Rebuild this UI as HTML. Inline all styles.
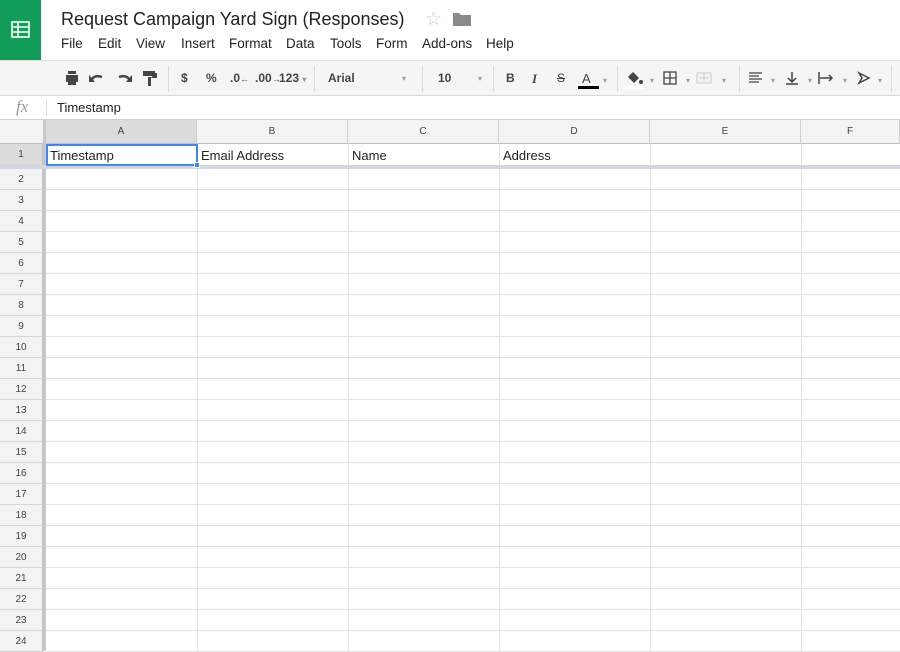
<!DOCTYPE html>
<html><head><style>
*{margin:0;padding:0;box-sizing:border-box}
body{width:900px;height:651px;overflow:hidden;background:#fff;font-family:"Liberation Sans",Arial,sans-serif;position:relative}
.abs{position:absolute}
.logo{left:0;top:0;width:41px;height:60px;background:#0f9d58}
.title{left:61px;top:9px;font-size:18px;color:#222}
.menu{top:36px;font-size:13.5px;color:#222}
.tb{left:0;top:60px;width:900px;height:36px;background:#f5f5f5;border-top:1px solid #e0e0e0;border-bottom:1px solid #d9d9d9}
.sep{top:66px;width:1px;height:26px;background:#dadada}
.ti{top:71px;font-size:12px;color:#444;font-weight:bold}
.fb{top:96px;height:24px;width:900px;border-bottom:1px solid #d0d0d0}
.ch{top:120px;height:24px;background:#f3f3f3;border-bottom:1px solid #c0c0c0;font-size:10px;color:#444;text-align:center;line-height:24px;border-right:1px solid #d0d0d0}
.rh{left:0;width:43px;height:21px;background:#f3f3f3;border-bottom:1px solid #d8d8d8;border-right:1px solid #c0c0c0;font-size:10px;color:#444;text-align:center;line-height:21px}
.vl{top:144px;width:1px;height:507px;background:#e2e2e2}
.hl{left:46px;width:854px;height:1px;background:#e2e2e2}
.cell{top:148px;font-size:13px;color:#222}
.dd{font-size:8px;color:#999}
</style></head><body>
<div class="abs logo">
<svg class="abs" style="left:11px;top:21px" width="19" height="17" viewBox="0 0 19 17"><rect x="1" y="1" width="17" height="15" fill="none" stroke="#fff" stroke-width="1.6"/><path d="M1 6h17M1 11h17M7 1v15" stroke="#fff" stroke-width="1.6"/></svg>
</div>
<div class="abs title">Request Campaign Yard Sign (Responses)</div>
<div class="abs" style="left:425px;top:8px;font-size:19px;color:#ccc">☆</div>
<svg class="abs" style="left:453px;top:12px" width="18" height="14"><path d="M0 1h6l2 2h10v11H0z" fill="#8a8a8a"/></svg>
<div class="abs menu" style="left:61px">File</div>
<div class="abs menu" style="left:98px">Edit</div>
<div class="abs menu" style="left:136px">View</div>
<div class="abs menu" style="left:181px">Insert</div>
<div class="abs menu" style="left:229px">Format</div>
<div class="abs menu" style="left:286px">Data</div>
<div class="abs menu" style="left:330px">Tools</div>
<div class="abs menu" style="left:376px">Form</div>
<div class="abs menu" style="left:422px">Add-ons</div>
<div class="abs menu" style="left:486px">Help</div>
<div class="abs tb"></div>
<svg class="abs" style="left:63px;top:70px" width="100" height="16">
<path d="M3 5h12v7h-2v3H5v-3H3z M5 1h8v3H5z" fill="#444"/>
<path d="M28 11 q3-7 11-4" stroke="#444" stroke-width="2.4" fill="none"/><path d="M26 5v7h6z" fill="#444"/>
<path d="M67 11 q-3-7-11-4" stroke="#444" stroke-width="2.4" fill="none"/><path d="M69 5v7h-6z" fill="#444"/>
<path d="M80 1h12v5h-12z M85 7h3v9h-3z M92 3h2v5h-6v0" fill="#444"/>
</svg>
<div class="abs sep" style="left:168px"></div>
<div class="abs ti" style="left:181px">$</div>
<div class="abs ti" style="left:206px">%</div>
<div class="abs ti" style="left:230px">.0<span style="font-size:9px">←</span></div>
<div class="abs ti" style="left:255px">.00<span style="font-size:9px">→</span></div>
<div class="abs ti" style="left:279px">123 <span class="dd">▾</span></div>
<div class="abs sep" style="left:314px"></div>
<div class="abs ti" style="left:328px">Arial</div>
<div class="abs dd" style="left:402px;top:74px">▾</div>
<div class="abs sep" style="left:422px"></div>
<div class="abs ti" style="left:438px">10</div>
<div class="abs dd" style="left:478px;top:74px">▾</div>
<div class="abs sep" style="left:493px"></div>
<div class="abs ti" style="left:506px">B</div>
<div class="abs ti" style="left:532px;font-style:italic;font-family:'Liberation Serif',serif;font-size:13px">I</div>
<div class="abs ti" style="left:557px;text-decoration:line-through;font-weight:normal">S</div>
<div class="abs ti" style="left:582px;font-weight:normal;font-size:13px">A</div>
<div class="abs" style="left:578px;top:86px;width:21px;height:3px;background:#000"></div>
<div class="abs dd" style="left:603px;top:76px">▾</div>
<div class="abs sep" style="left:617px"></div>
<svg class="abs" style="left:626px;top:70px" width="110" height="16">
<path d="M2 7l5-5 6 6-5 5z" fill="#444"/><circle cx="15" cy="12" r="2" fill="#444"/>
<rect x="38" y="2" width="12" height="12" fill="none" stroke="#444" stroke-width="1.3"/><path d="M38 8h12M44 2v12" stroke="#444" stroke-width="1.3"/>
<rect x="71" y="3" width="14" height="10" fill="none" stroke="#ccc"/><path d="M78 3v10M73 8h10" stroke="#ccc"/>
</svg>
<div class="abs" style="left:623px;top:86px;width:20px;height:3px;background:#fff"></div>
<div class="abs dd" style="left:650px;top:76px">▾</div>
<div class="abs dd" style="left:686px;top:76px">▾</div>
<div class="abs dd" style="left:722px;top:76px">▾</div>
<div class="abs sep" style="left:739px"></div>
<svg class="abs" style="left:748px;top:70px" width="135" height="16">
<path d="M1 3h13M1 6h10M1 9h13M1 12h10" stroke="#444" stroke-width="1.2"/>
<path d="M44 2v9M40 8l4 4 4-4M38 14h12" stroke="#444" stroke-width="1.5" fill="none"/>
<path d="M71 2v12M72 8h12M81 5l3 3-3 3" stroke="#444" stroke-width="1.5" fill="none"/>
<path d="M111 3l10 5-10 5 3-5z" stroke="#444" stroke-width="1.5" fill="none"/>
</svg>
<div class="abs dd" style="left:771px;top:76px">▾</div>
<div class="abs dd" style="left:808px;top:76px">▾</div>
<div class="abs dd" style="left:843px;top:76px">▾</div>
<div class="abs dd" style="left:878px;top:76px">▾</div>
<div class="abs sep" style="left:891px"></div>
<div class="abs fb"></div>
<div class="abs" style="left:16px;top:97px;font-family:'Liberation Serif',serif;font-style:italic;font-size:17px;color:#999">fx</div>
<div class="abs" style="left:46px;top:100px;width:1px;height:16px;background:#ddd"></div>
<div class="abs" style="left:57px;top:100px;font-size:13px;color:#222">Timestamp</div>
<div class="abs ch" style="left:0;width:43px;border-right:none"></div>
<div class="abs" style="left:43px;top:120px;width:3px;height:531px;background:#c8c8c8"></div>
<div class="abs ch" style="left:46px;width:151px;background:#dcdcdc">A</div>
<div class="abs ch" style="left:197px;width:151px">B</div>
<div class="abs ch" style="left:348px;width:151px">C</div>
<div class="abs ch" style="left:499px;width:151px">D</div>
<div class="abs ch" style="left:650px;width:151px">E</div>
<div class="abs ch" style="left:801px;width:99px">F</div>
<div class="abs vl" style="left:197px"></div>
<div class="abs vl" style="left:348px"></div>
<div class="abs vl" style="left:499px"></div>
<div class="abs vl" style="left:650px"></div>
<div class="abs vl" style="left:801px"></div>
<div class="abs rh" style="top:144px;background:#dcdcdc">1</div>
<div class="abs" style="left:0;top:165px;width:900px;height:4px;background:#d4d8de"></div>
<div id="rows"></div>
<script>
var h='';for(var i=2;i<=24;i++){var t=169+(i-2)*21;h+='<div class="abs rh" style="top:'+t+'px">'+i+'</div><div class="abs hl" style="top:'+(t+20)+'px"></div>';}
document.getElementById('rows').innerHTML=h;
</script>
<div class="abs cell" style="left:50px">Timestamp</div>
<div class="abs cell" style="left:201px">Email Address</div>
<div class="abs cell" style="left:352px">Name</div>
<div class="abs cell" style="left:503px">Address</div>
<div class="abs" style="left:46px;top:144px;width:152px;height:22px;border:2px solid #4285f4"></div>
<div class="abs" style="left:194px;top:162px;width:6px;height:6px;background:#4285f4;border:1px solid #fff"></div>
</body></html>
